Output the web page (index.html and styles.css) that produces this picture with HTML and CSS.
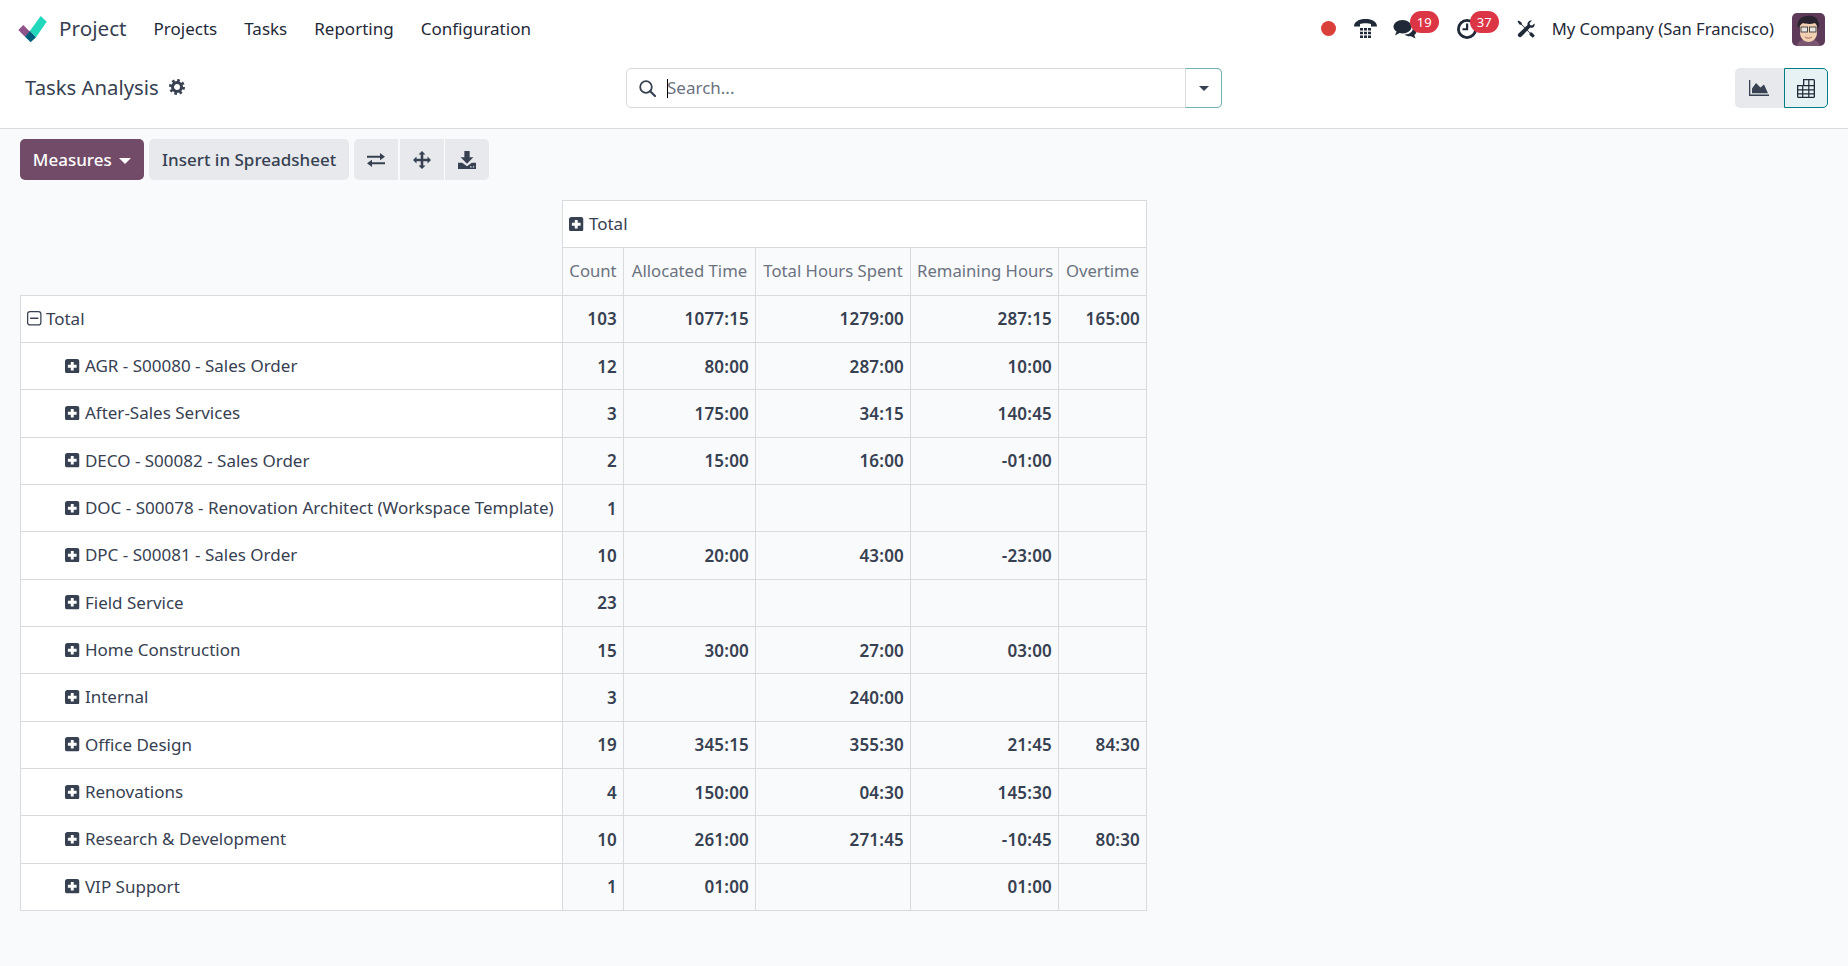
FILE: index.html
```html
<!DOCTYPE html>
<html lang="en">
<head>
    <meta charset="UTF-8">
    <title>Tasks Analysis - Project</title>
    <link rel="stylesheet" href="styles.css">
</head>
<body>
    <svg class="icon-defs" width="0" height="0">
        <symbol id="plus-square" viewBox="0 0 14 14">
            <path fill-rule="evenodd" d="M2.500 0h9A2.500 2.500 0 0 1 14 2.500v9a2.500 2.500 0 0 1-2.500 2.500h-9A2.500 2.500 0 0 1 0 11.500v-9A2.500 2.500 0 0 1 2.500 0zM5.600 2.800v2.800H2.800v2.800h2.800v2.800h2.800V8.400h2.800V5.600H8.400V2.800z"/>
        </symbol>
    </svg>

    <!-- barra superior -->
    <nav class="navbar">
        <a class="brand">
            <svg class="logo" viewBox="0 0 29 27">
                <polygon fill="#8f5289" points="0.3,14 5.3,9 12,15.7 7,20.7"/>
                <polygon fill="#005e7d" points="7,20.7 12,14.7 18,21.3 12.7,26.3"/>
                <polygon fill="#21d8bd" points="12,14.7 22.7,0 28.7,5.7 18,21.3"/>
            </svg>
            <span class="brand-name">Project</span>
        </a>
        <a class="menu-item">Projects</a>
        <a class="menu-item">Tasks</a>
        <a class="menu-item">Reporting</a>
        <a class="menu-item">Configuration</a>

        <div class="systray">
            <span class="record-dot"></span>
            <svg class="tray-icon phone" viewBox="0 0 23 20">
                <path d="M0 7.500C0 2.500 5 0 11.500 0S23 2.500 23 7.500h-6V5c-2-1-9-1-11 0v2.500z"/>
                <path d="M6 9h3v2.500H6zM10 9h3v2.500h-3zM14 9h3v2.500h-3zM6 12.700h3v2.500H6zM10 12.700h3v2.500h-3zM14 12.700h3v2.500h-3zM6 16.500h3V19H6zM10 16.500h3V19h-3zM14 16.500h3V19h-3z"/>
            </svg>
            <span class="tray-item chat">
                <svg class="tray-icon" viewBox="0 0 24 20">
                    <path d="M9.500 1C14.500 1 18.500 4 18.500 7.800S14.500 14.500 9.500 14.500c-1 0-2-.1-3-.4L2 16.500l1.500-4C1.500 11.200.5 9.600.5 7.800.5 4 4.500 1 9.500 1z"/>
                    <path d="M19.500 7.500c2.500 1 4 2.800 4 4.800 0 1.500-.8 2.800-2.200 3.800l1.200 3.400-4.500-2.300c-2.500.3-5-.2-6.500-1.700 5 .2 9-3 8.500-8z"/>
                </svg>
                <span class="badge">19</span>
            </span>
            <span class="tray-item clock">
                <svg class="tray-icon" viewBox="0 0 20 20">
                    <circle cx="10" cy="10" r="8.600" fill="none" stroke="currentColor" stroke-width="2.800"/>
                    <path d="M9 4.500h2.200v6.800H5.500V9.200H9z"/>
                </svg>
                <span class="badge">37</span>
            </span>
            <svg class="tray-icon tools" viewBox="0 0 18 18">
                <path d="M1.500 0.500 4.500 2.500 5 4.500 13 12.500 15 12.500 17.800 15.800 15.800 17.800 12.500 15 12.500 13 4.500 5 2.500 4.500.5 1.500z"/>
                <path d="M17.500 3.500c.5 2-.5 4-2.500 4.300-.7.100-1.300 0-1.800-.2L4.500 16.500a2 2 0 0 1-3-3L10.500 5c-.3-2 .8-4 3-4.500.5-.1 1-.1 1.500 0L12.500 3l.5 2 2 .5z"/>
            </svg>
            <span class="company">My Company (San Francisco)</span>
            <svg class="avatar" viewBox="0 0 33 33">
                <rect width="33" height="33" rx="5" fill="#5c3a58"/>
                <path d="M5 33c1-5 5-7 11-7s11 2 12 7z" fill="#7a5670"/>
                <path d="M8 13c0-3 3-5 8-5s9 2 9 6v6c0 5-4 9-8.500 9S8 25 8 20z" fill="#f3cfb2"/>
                <path d="M6 15C4 8 9 3 15 3c5-1 11 1 11 6 2 1 1 5 0 7-.5-3-1.500-5-3-6-4 1.500-9 1-12 0-2 1-3.500 3-5 5z" fill="#2b2430"/>
                <rect x="9" y="14" width="6.500" height="5" fill="#e9e4df" stroke="#4a4a4a"/>
                <rect x="17.500" y="14" width="6.500" height="5" fill="#e9e4df" stroke="#4a4a4a"/>
                <path d="M13 24c2 1.500 5 1.500 7 0" fill="none" stroke="#a86a5a"/>
            </svg>
        </div>
    </nav>

    <!-- titulo y buscador -->
    <header class="control-panel">
        <div class="page-title">
            <span>Tasks Analysis</span>
            <svg class="gear" viewBox="0 0 16 16">
                <circle cx="8" cy="8" r="4.500" fill="none" stroke="currentColor" stroke-width="3"/>
                <circle cx="8" cy="8" r="6.600" fill="none" stroke="currentColor" stroke-width="2.800" stroke-dasharray="2.600 2.580"/>
            </svg>
        </div>
        <div class="search-bar">
            <svg class="search-icon" viewBox="0 0 17 17">
                <circle cx="7" cy="7" r="5.800" fill="none" stroke="currentColor" stroke-width="1.800"/>
                <path d="M11 11l5 5" stroke="currentColor" stroke-width="2.200" stroke-linecap="round"/>
            </svg>
            <div class="search-field">
                <input type="text" class="search-input" placeholder="Search...">
            </div>
            <button class="search-toggle"><span class="caret"></span></button>
        </div>
        <div class="view-switch">
            <button class="view-button">
                <svg viewBox="0 0 20 16">
                    <path d="M0 0h1.300v14.500H20V16H0z"/>
                    <path d="M3 13.200V8.500L7 3l4.500 4.500L15 4.500l4 8.700z"/>
                </svg>
            </button>
            <button class="view-button active">
                <svg viewBox="0 0 18 19">
                    <path fill-rule="evenodd" d="M6 0h10.500A1.500 1.500 0 0 1 18 1.500v16a1.500 1.500 0 0 1-1.500 1.500h-15A1.500 1.500 0 0 1 0 17.500V6h6zM1.300 7.300v3h3.800v-3zm5 0v3h4.900v-3zm6.100 0v3h4.300v-3zM1.300 11.500v2.800h3.800v-2.800zm5 0v2.800h4.900v-2.800zm6.100 0v2.800h4.300v-2.800zM1.300 15.500v2.200h3.800v-2.200zm5 0v2.200h4.900v-2.200zm6.100 0v2.200h4.300v-2.200zM7.300 1.300V6h3.900V1.300zm5.100 0V6h4.300V1.300z"/>
                </svg>
            </button>
        </div>
    </header>

    <!-- botones de la tabla -->
    <div class="toolbar">
        <button class="btn btn-primary">Measures <span class="caret"></span></button>
        <button class="btn">Insert in Spreadsheet</button>
        <div class="btn-group">
            <button class="btn btn-icon">
                <svg viewBox="0 0 18 14">
                    <path d="M0 2.700h13V0l5 3.700-5 3.600V4.700H0zM18 9.300H5V6.700L0 10.300 5 14v-2.700h13z"/>
                </svg>
            </button>
            <button class="btn btn-icon">
                <svg viewBox="0 0 18 18">
                    <path d="M9 0l3.500 3.500h-2.200v4.200h4.200V5.500L18 9l-3.500 3.500v-2.200h-4.200v4.200h2.200L9 18l-3.500-3.500h2.200v-4.200H3.500v2.200L0 9l3.500-3.500v2.200h4.200V3.500H5.500z"/>
                </svg>
            </button>
            <button class="btn btn-icon">
                <svg viewBox="0 0 17 17">
                    <path d="M6 0h5v6h3.500L8.500 12 2.500 6H6z"/>
                    <path fill-rule="evenodd" d="M0 11h4l4.500 3.500L13 11h4v6H0zm11.500 3.500v1.200h1.300v-1.200zm2.500 0v1.200h1.300v-1.200z"/>
                </svg>
            </button>
        </div>
    </div>

    <!-- tabla pivot -->
    <table class="pivot">
        <colgroup>
            <col class="col-name">
            <col class="col-count">
            <col class="col-allocated">
            <col class="col-spent">
            <col class="col-remaining">
            <col class="col-overtime">
        </colgroup>
        <thead>
            <tr>
                <th class="corner"></th>
                <th class="group-head" colspan="5"><svg class="toggle"><use href="#plus-square"/></svg> Total</th>
            </tr>
            <tr>
                <th class="corner"></th>
                <th class="measure">Count</th>
                <th class="measure">Allocated Time</th>
                <th class="measure">Total Hours Spent</th>
                <th class="measure">Remaining Hours</th>
                <th class="measure">Overtime</th>
            </tr>
        </thead>
        <tbody>
            <tr>
                <th class="row-name total"><svg class="toggle-open" viewBox="0 0 14 14"><rect x=".6" y=".6" width="12.800" height="12.800" rx="2.400" fill="none" stroke="currentColor" stroke-width="1.200"/><path d="M3 6.300h8v1.400H3z" fill="currentColor"/></svg> Total</th>
                <td>103</td><td>1077:15</td><td>1279:00</td><td>287:15</td><td>165:00</td>
            </tr>
            <tr>
                <th class="row-name"><svg class="toggle"><use href="#plus-square"/></svg> AGR - S00080 - Sales Order</th>
                <td>12</td><td>80:00</td><td>287:00</td><td>10:00</td><td></td>
            </tr>
            <tr>
                <th class="row-name"><svg class="toggle"><use href="#plus-square"/></svg> After-Sales Services</th>
                <td>3</td><td>175:00</td><td>34:15</td><td>140:45</td><td></td>
            </tr>
            <tr>
                <th class="row-name"><svg class="toggle"><use href="#plus-square"/></svg> DECO - S00082 - Sales Order</th>
                <td>2</td><td>15:00</td><td>16:00</td><td>-01:00</td><td></td>
            </tr>
            <tr>
                <th class="row-name"><svg class="toggle"><use href="#plus-square"/></svg> DOC - S00078 - Renovation Architect (Workspace Template)</th>
                <td>1</td><td></td><td></td><td></td><td></td>
            </tr>
            <tr>
                <th class="row-name"><svg class="toggle"><use href="#plus-square"/></svg> DPC - S00081 - Sales Order</th>
                <td>10</td><td>20:00</td><td>43:00</td><td>-23:00</td><td></td>
            </tr>
            <tr>
                <th class="row-name"><svg class="toggle"><use href="#plus-square"/></svg> Field Service</th>
                <td>23</td><td></td><td></td><td></td><td></td>
            </tr>
            <tr>
                <th class="row-name"><svg class="toggle"><use href="#plus-square"/></svg> Home Construction</th>
                <td>15</td><td>30:00</td><td>27:00</td><td>03:00</td><td></td>
            </tr>
            <tr>
                <th class="row-name"><svg class="toggle"><use href="#plus-square"/></svg> Internal</th>
                <td>3</td><td></td><td>240:00</td><td></td><td></td>
            </tr>
            <tr>
                <th class="row-name"><svg class="toggle"><use href="#plus-square"/></svg> Office Design</th>
                <td>19</td><td>345:15</td><td>355:30</td><td>21:45</td><td>84:30</td>
            </tr>
            <tr>
                <th class="row-name"><svg class="toggle"><use href="#plus-square"/></svg> Renovations</th>
                <td>4</td><td>150:00</td><td>04:30</td><td>145:30</td><td></td>
            </tr>
            <tr>
                <th class="row-name"><svg class="toggle"><use href="#plus-square"/></svg> Research &amp; Development</th>
                <td>10</td><td>261:00</td><td>271:45</td><td>-10:45</td><td>80:30</td>
            </tr>
            <tr>
                <th class="row-name"><svg class="toggle"><use href="#plus-square"/></svg> VIP Support</th>
                <td>1</td><td>01:00</td><td></td><td>01:00</td><td></td>
            </tr>
        </tbody>
    </table>
</body>
</html>
```

FILE: styles.css
```css
* {
    box-sizing: border-box;
}
body {
    margin: 0;
    height: 966px;
    overflow: hidden;
    font-family: "Noto Sans", sans-serif;
    font-size: 17px;
    color: #374151;
    background-color: #f9fafb;
}
svg {
    fill: currentColor;
}
.icon-defs {
    position: absolute;
}

.navbar {
    display: flex;
    align-items: center;
    height: 58px;
    padding-left: 18px;
    background-color: #fff;
}
.brand {
    display: flex;
    align-items: center;
    margin-right: 27px;
}
.logo {
    width: 29px;
    height: 27px;
    margin-right: 12px;
}
.brand-name {
    margin-top: -2px;
    font-size: 20.700px;
    color: #374151;
}
.menu-item {
    margin-top: -2px;
    margin-right: 27px;
    color: #1f2937;
}
.systray {
    display: flex;
    align-items: center;
    margin-left: auto;
    padding-right: 23px;
    color: #1f2937;
}
.record-dot {
    width: 15px;
    height: 15px;
    margin-top: -2px;
    margin-right: 18px;
    border-radius: 50%;
    background-color: #d9403a;
}
.tray-icon {
    display: block;
}
.phone {
    width: 23px;
    height: 20px;
    margin-right: 16px;
}
.tray-item {
    position: relative;
    display: block;
}
.chat {
    margin-right: 40px;
}
.chat .tray-icon {
    width: 24px;
    height: 20px;
}
.clock {
    margin-right: 40px;
}
.clock .tray-icon {
    width: 20px;
    height: 20px;
}
.badge {
    position: absolute;
    top: -8px;
    left: 17px;
    width: 29px;
    height: 22px;
    border-radius: 11px;
    background-color: #dc3545;
    color: #fff;
    font-size: 13px;
    line-height: 22px;
    text-align: center;
}
.clock .badge {
    left: 13px;
}
.tools {
    width: 18px;
    height: 18px;
    margin-right: 17px;
}
.company {
    margin-top: -2px;
    margin-right: 18px;
    font-size: 16.600px;
    white-space: nowrap;
}
.avatar {
    width: 33px;
    height: 33px;
}

.control-panel {
    display: grid;
    grid-template-columns: 601px 596px 1fr;
    align-items: center;
    height: 71px;
    padding: 10px 20px 20px 25px;
    border-bottom: 1px solid #d8dadd;
    background-color: #fff;
}
.page-title {
    display: flex;
    align-items: center;
    gap: 10px;
    margin-top: -2px;
    font-size: 20.300px;
}
.gear {
    width: 16px;
    height: 16px;
}
.search-bar {
    position: relative;
    display: flex;
    align-items: center;
    height: 40px;
    border: 1px solid #d8dadd;
    border-radius: 5px;
    background-color: #fff;
}
.search-icon {
    width: 17px;
    height: 17px;
    margin-left: 12px;
}
.search-field {
    position: relative;
    flex: 1;
    height: 100%;
    margin-left: 11px;
}
.search-field::before {
    content: "";
    position: absolute;
    top: 10px;
    left: 0;
    width: 1px;
    height: 19px;
    background-color: #000;
}
.search-input {
    width: 100%;
    height: 100%;
    padding: 0 0 2px;
    border: none;
    outline: none;
    background: none;
    font: inherit;
}
.search-input::placeholder {
    color: #6b7280;
}
.search-toggle {
    width: 37px;
    height: 40px;
    margin: -1px;
    padding: 0;
    border: 1px solid #6eb2b5;
    border-left-color: #d8dadd;
    border-radius: 0 5px 5px 0;
    background: none;
}
.caret {
    display: inline-block;
    border-top: 5.500px solid #374151;
    border-left: 5.500px solid transparent;
    border-right: 5.500px solid transparent;
    vertical-align: 2px;
}
.view-switch {
    display: flex;
    justify-content: flex-end;
}
.view-button {
    display: flex;
    align-items: center;
    justify-content: center;
    width: 49px;
    height: 40px;
    padding: 0 2px 0 0;
    border: none;
    border-radius: 5px 0 0 5px;
    background-color: #e7e9ed;
    color: #374151;
}
.view-button svg {
    width: 20px;
    height: 16px;
}
.view-button.active {
    width: 44px;
    padding: 0;
    border: 1px solid #017e84;
    border-radius: 0 5px 5px 0;
    background-color: #e6f2f3;
    color: #1f2937;
}
.view-button.active svg {
    width: 18px;
    height: 19px;
}

.toolbar {
    display: flex;
    gap: 5px;
    padding: 10px 0 20px 20px;
}
.btn {
    height: 41px;
    padding: 0 13px;
    border: none;
    border-radius: 5px;
    background-color: #e7e9ed;
    color: #374151;
    font: inherit;
    font-size: 17px;
    font-weight: 500;
}
.btn-primary {
    width: 124px;
    padding: 0;
    background-color: #714b67;
    color: #fff;
}
.btn-primary .caret {
    margin-left: 3px;
    border-top: 6px solid #fff;
    border-left-width: 6px;
    border-right-width: 6px;
}
.btn-group {
    display: flex;
    gap: 1.500px;
}
.btn-icon {
    display: flex;
    align-items: center;
    justify-content: center;
    width: 44px;
    padding: 0;
    border-radius: 0;
}
.btn-icon:first-child {
    border-radius: 5px 0 0 5px;
}
.btn-icon:last-child {
    border-radius: 0 5px 5px 0;
}
.btn-icon svg {
    width: 18px;
    height: 18px;
}

.pivot {
    width: 1126px;
    margin-left: 20px;
    border-collapse: collapse;
    table-layout: fixed;
}
.col-name {
    width: 542px;
}
.col-count {
    width: 61px;
}
.col-allocated {
    width: 132px;
}
.col-spent {
    width: 155px;
}
.col-remaining {
    width: 148px;
}
.col-overtime {
    width: 88px;
}
.pivot th,
.pivot td {
    height: 47.340px;
    padding: 0 6px;
    border: 1px solid #d8dadd;
    font-weight: 400;
    white-space: nowrap;
}
.pivot .corner {
    border: none;
    border-right: 1px solid #d8dadd;
    background: none;
}
.pivot .group-head {
    padding-bottom: 1px;
    background-color: #fff;
    text-align: left;
}
.pivot .measure {
    padding-bottom: 2px;
    background-color: #f9fafb;
    color: #6b7280;
    font-size: 16.700px;
    text-align: center;
}
.pivot .row-name {
    padding-bottom: 1px;
    padding-left: 44px;
    background-color: #fff;
    text-align: left;
}
.pivot .row-name.total {
    padding-left: 6px;
}
.pivot td {
    background-color: #f9fafb;
    font-weight: 600;
    letter-spacing: 0.2px;
    text-align: right;
}
.toggle,
.toggle-open {
    width: 14.500px;
    height: 14.500px;
    vertical-align: -1px;
}
.toggle {
    margin-right: 1px;
}
```
